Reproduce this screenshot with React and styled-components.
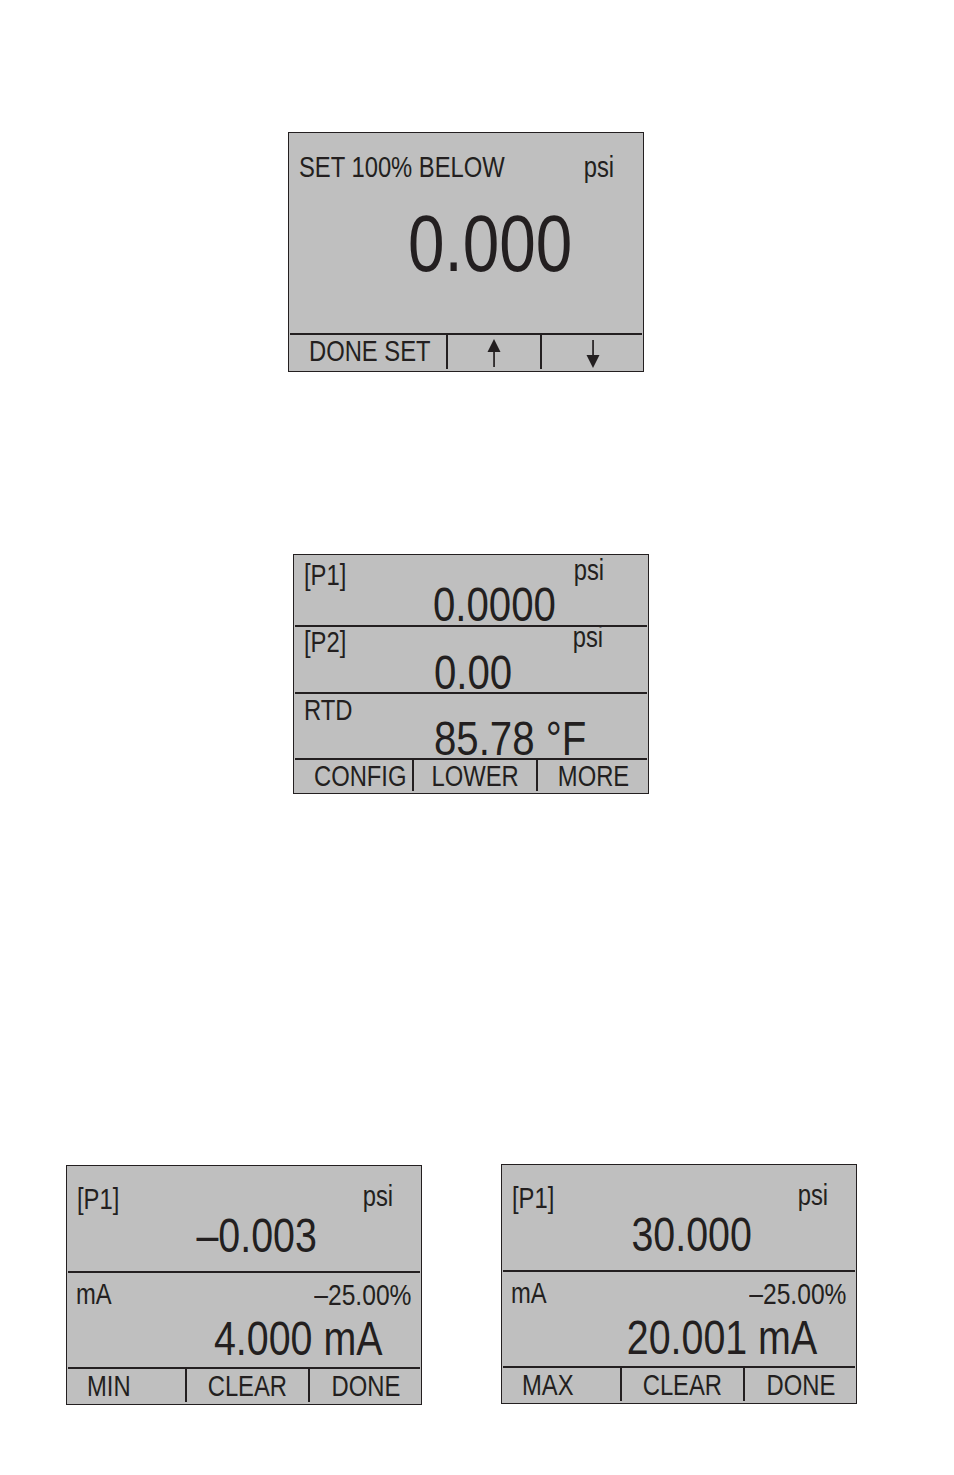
import React from 'react'
import styled, { createGlobalStyle } from 'styled-components'

const ink = '#231f20'
const lcd = '#bfbfbf'

// the display face is a condensed grotesque; Liberation Sans squeezed horizontally stands in for it
const squeeze = 'scaleX(0.82)'

const GlobalStyle = createGlobalStyle`
  html, body {
    margin: 0;
    padding: 0;
    background: #ffffff;
  }
  body {
    font-family: "Liberation Sans", Arial, sans-serif;
    color: ${ink};
  }
`

const Page = styled.div`
  width: 954px;
  min-height: 1475px;
  padding-top: 132px;
  box-sizing: border-box;
  display: flex;
  flex-direction: column;
`

const Placed = styled.div`
  margin-left: ${p => p.left}px;
  margin-top: ${p => p.top || 0}px;
`

const PairRow = styled.div`
  display: flex;
  gap: 79px;
  margin-left: 66px;
  margin-top: 371px;
  align-items: flex-start;
`

const Screen = styled.div`
  width: 356px;
  height: 240px;
  box-sizing: border-box;
  border: 1.5px solid ${ink};
  background: ${lcd};
  display: flex;
  flex-direction: column;
  margin-top: ${p => p.shift || 0}px;
`

const Field = styled.div`
  height: ${p => p.h}px;
  flex: none;
  display: flex;
  flex-direction: column;
  box-sizing: border-box;
`

const Rule = styled.div`
  height: 2px;
  flex: none;
  margin: 0 1px;
  background: ${ink};
`

const Header = styled.div`
  display: flex;
  justify-content: space-between;
  align-items: flex-start;
  padding: ${p => p.top}px ${p => p.right}px 0 ${p => p.left}px;
`

const Label = styled.span`
  display: inline-block;
  font-size: 29px;
  line-height: 1;
  white-space: nowrap;
  transform: ${squeeze};
  transform-origin: left center;
`

const Unit = styled.span`
  display: inline-block;
  font-size: ${p => p.size || 29}px;
  line-height: 1;
  white-space: nowrap;
  margin-top: ${p => (p.raise ? -p.raise : 0)}px;
  transform: ${squeeze};
  transform-origin: right center;
`

const Reading = styled.div`
  font-size: ${p => p.size}px;
  line-height: 0.85;
  white-space: nowrap;
  margin-top: ${p => p.gap}px;
  text-align: ${p => (p.right != null ? 'right' : 'left')};
  padding-left: ${p => p.left || 0}px;
  padding-right: ${p => p.right || 0}px;
`

const Digits = styled.span`
  display: inline-block;
  transform: ${squeeze};
  transform-origin: ${p => (p.end ? 'right' : 'left')} center;
`

const Keys = styled.div`
  flex: 1;
  display: grid;
  grid-template-columns: ${p => p.cols};
  padding-bottom: 2px;
`

const Key = styled.div`
  display: flex;
  justify-content: ${p => (p.first ? 'flex-start' : 'center')};
  align-items: flex-start;
  padding-top: ${p => p.top}px;
  padding-left: ${p => (p.first ? 20 : 0)}px;
  border-left: ${p => (p.first ? 'none' : `2px solid ${ink}`)};
  font-size: 29px;
  line-height: 1;
  white-space: nowrap;
  overflow: hidden;
`

const KeyText = styled.span`
  display: inline-block;
  transform: ${squeeze};
  transform-origin: ${p => (p.first ? 'left' : 'center')} center;
`

function UpArrow() {
  return (
    <svg width="14" height="28" viewBox="0 0 14 28">
      <polygon points="0.5,13 7,0 13.5,13" fill={ink} />
      <rect x="6.2" y="11" width="1.7" height="17" fill={ink} />
    </svg>
  )
}

function DownArrow() {
  return (
    <svg width="14" height="28" viewBox="0 0 14 28">
      <rect x="6.2" y="0" width="1.7" height="17" fill={ink} />
      <polygon points="0.5,15 7,28 13.5,15" fill={ink} />
    </svg>
  )
}

function Value({ size, gap, left, right, children }) {
  return (
    <Reading size={size} gap={gap} left={left} right={right}>
      <Digits end={right != null}>{children}</Digits>
    </Reading>
  )
}

function SoftKey({ first, top, children }) {
  return (
    <Key first={first} top={top}>
      <KeyText first={first}>{children}</KeyText>
    </Key>
  )
}

function SetScreen() {
  return (
    <Screen>
      <Field h={199.5}>
        <Header top={20} left={10} right={29}>
          <Label>SET 100% BELOW</Label>
          <Unit>psi</Unit>
        </Header>
        <Value size={80} gap={28} right={71}>0.000</Value>
      </Field>
      <Rule />
      <Keys cols="157px 94px 1fr">
        <SoftKey first top={2}>DONE SET</SoftKey>
        <Key top={4}><UpArrow /></Key>
        <Key top={5}><DownArrow /></Key>
      </Keys>
    </Screen>
  )
}

function TripleScreen() {
  return (
    <Screen>
      <Field h={69.5}>
        <Header top={6} left={10} right={44}>
          <Label>[P1]</Label>
          <Unit raise={5}>psi</Unit>
        </Header>
        <Value size={49} gap={-6.3} left={139}>0.0000</Value>
      </Field>
      <Rule />
      <Field h={65}>
        <Header top={1} left={10} right={45}>
          <Label>[P2]</Label>
          <Unit raise={5}>psi</Unit>
        </Header>
        <Value size={49} gap={-4.3} left={140}>0.00</Value>
      </Field>
      <Rule />
      <Field h={64}>
        <Header top={2} left={10} right={44}>
          <Label>RTD</Label>
        </Header>
        <Value size={49} gap={-6.8} left={140}>85.78 °F</Value>
      </Field>
      <Rule />
      <Keys cols="118px 124px 1fr">
        <SoftKey first top={2}>CONFIG</SoftKey>
        <SoftKey top={2}>LOWER</SoftKey>
        <SoftKey top={2}>MORE</SoftKey>
      </Keys>
    </Screen>
  )
}

function LoopScreen({ pressure, current, low, shift }) {
  return (
    <Screen shift={shift}>
      <Field h={104.5}>
        <Header top={19} left={10} right={28}>
          <Label>[P1]</Label>
          <Unit raise={3}>psi</Unit>
        </Header>
        <Value size={48} gap={1.6} right={104}>{pressure}</Value>
      </Field>
      <Rule />
      <Field h={94}>
        <Header top={7} left={9} right={10}>
          <Label>mA</Label>
          <Unit size={30}>–25.00%</Unit>
        </Header>
        <Value size={48} gap={9.1} right={39}>{current}</Value>
      </Field>
      <Rule />
      <Keys cols="118px 123px 1fr">
        <SoftKey first top={3}>{low}</SoftKey>
        <SoftKey top={3}>CLEAR</SoftKey>
        <SoftKey top={3}>DONE</SoftKey>
      </Keys>
    </Screen>
  )
}

export default function App() {
  return (
    <Page>
      <GlobalStyle />
      <Placed left={288}>
        <SetScreen />
      </Placed>
      <Placed left={293} top={182}>
        <TripleScreen />
      </Placed>
      <PairRow>
        <LoopScreen pressure="–0.003" current="4.000 mA" low="MIN" />
        <LoopScreen pressure="30.000" current="20.001 mA" low="MAX" shift={-1} />
      </PairRow>
    </Page>
  )
}
